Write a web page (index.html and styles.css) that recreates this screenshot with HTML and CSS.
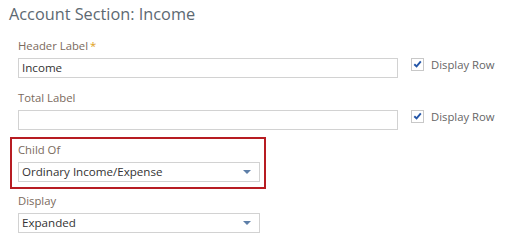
FILE: index.html
```html
<!DOCTYPE html>
<html>
<head>
<meta charset="utf-8">
<link rel="stylesheet" href="styles.css">
</head>
<body>
<h1 class="title">Account Section: Income</h1>
<div class="form">
  <div class="field">
    <div class="label">Header Label<span class="req">*</span></div>
    <div class="row">
      <div class="input">Income</div>
      <label class="check"><span class="box"><svg viewBox="0 0 12 12" width="12" height="12"><path d="M2.5 6.2 L5 8.6 L9.6 3.2" fill="none" stroke="#2456a8" stroke-width="2.1"/></svg></span>Display Row</label>
    </div>
  </div>
  <div class="field last">
    <div class="label">Total Label</div>
    <div class="row">
      <div class="input"></div>
      <label class="check"><span class="box"><svg viewBox="0 0 12 12" width="12" height="12"><path d="M2.5 6.2 L5 8.6 L9.6 3.2" fill="none" stroke="#2456a8" stroke-width="2.1"/></svg></span>Display Row</label>
    </div>
  </div>
  <div class="highlight">
    <div class="label">Child Of</div>
    <div class="select"><span>Ordinary Income/Expense</span><span class="arrow"></span></div>
  </div>
  <div class="field plain">
    <div class="label">Display</div>
    <div class="select"><span>Expanded</span><span class="arrow"></span></div>
  </div>
</div>
</body>
</html>
```
FILE: styles.css
```css
html, body {
  margin: 0;
  padding: 0;
  background: #fff;
  font-family: "Open Sans", "Liberation Sans", sans-serif;
}
.title {
  margin: 0;
  padding: 3px 0 0 9px;
  height: 35px;
  box-sizing: border-box;
  font-size: 16.3px;
  font-weight: 400;
  line-height: 23px;
  color: #5d6972;
}
.form {
  padding-left: 18px;
  display: flex;
  flex-direction: column;
}
.field {
  margin-bottom: 9px;
}
.field.last {
  margin-bottom: 7px;
}
.label {
  font-size: 11.3px;
  line-height: 16px;
  color: #7a6a5d;
  margin: 3px 0 4px;
}
.req {
  color: #e0a020;
  margin-left: 2px;
}
.row {
  display: flex;
  align-items: flex-start;
}
.input, .select {
  box-sizing: border-box;
  height: 20px;
  border: 1px solid #d2d2d2;
  background: #fff;
  font-size: 11.6px;
  line-height: 18px;
  color: #333;
  padding-left: 3px;
}
.input {
  width: 380px;
}
.check {
  display: flex;
  align-items: center;
  margin-left: 13px;
  font-size: 11.3px;
  color: #666;
  height: 14px;
  margin-top: -1px;
}
.box {
  box-sizing: border-box;
  width: 13px;
  height: 13px;
  border: 1px solid #c8c8c8;
  display: flex;
  align-items: center;
  justify-content: center;
  margin-right: 7px;
}
.box svg { display: block; }
.highlight {
  margin-left: -8px;
  width: 256px;
  box-sizing: border-box;
  border: 2px solid #b71c22;
  padding: 1px 0 5px 6px;
  margin-bottom: 1px;
}
.highlight .label { margin-top: 2px; }
.select {
  width: 242px;
  display: flex;
  justify-content: space-between;
  align-items: center;
  padding-right: 7px;
}
.arrow {
  width: 0;
  height: 0;
  border-left: 4px solid transparent;
  border-right: 4px solid transparent;
  border-top: 4px solid #5d7fa8;
  margin-right: 1px;
}
```
